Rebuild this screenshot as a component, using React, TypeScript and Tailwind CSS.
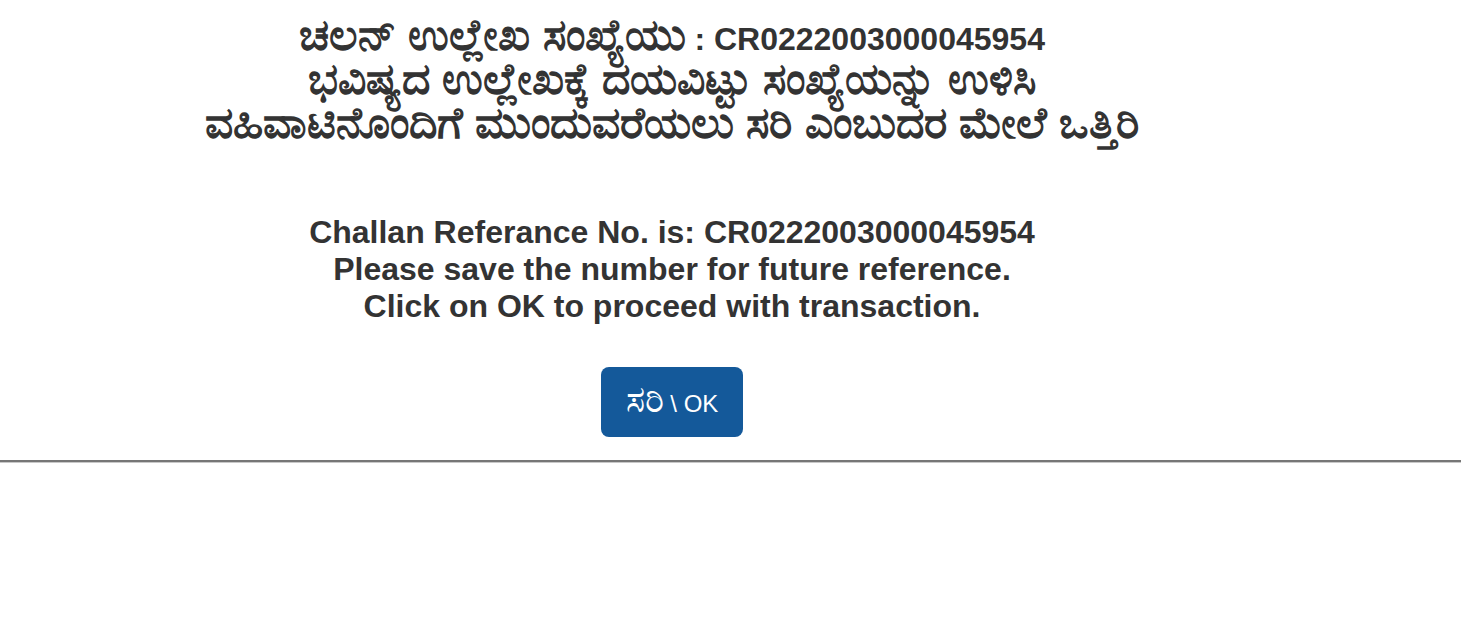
const kn = "inline-block text-[44px] leading-[44px]";

export default function App() {
  return (
    <main className="min-h-screen bg-white font-['Liberation_Sans',Arial,sans-serif] text-[#333333]">
      <div className="w-[1344px] pt-[13px] text-center font-bold">
        <div className="text-[32px] leading-[44px]">
          <p className="h-[44px]">
            <span className={kn}>ಚಲನ್ ಉಲ್ಲೇಖ ಸಂಖ್ಯೆಯು</span> : CR0222003000045954
          </p>
          <p className="h-[44px]">
            <span className={kn}>ಭವಿಷ್ಯದ ಉಲ್ಲೇಖಕ್ಕೆ ದಯವಿಟ್ಟು ಸಂಖ್ಯೆಯನ್ನು ಉಳಿಸಿ</span>
          </p>
          <p className="h-[44px]">
            <span className={kn}>ವಹಿವಾಟಿನೊಂದಿಗೆ ಮುಂದುವರೆಯಲು ಸರಿ ಎಂಬುದರ ಮೇಲೆ ಒತ್ತಿರಿ</span>
          </p>
        </div>
        <div className="mt-[69px] text-[32px] leading-[37px]">
          <p>Challan Referance No. is: CR0222003000045954</p>
          <p>Please save the number for future reference.</p>
          <p>Click on OK to proceed with transaction.</p>
        </div>
        <div className="mt-[42px] flex justify-center">
          <button
            type="button"
            className="h-[70px] w-[142px] rounded-lg bg-[#14599a] text-[24px] font-normal leading-none text-white"
          >
            <span className="inline-block text-[36px] leading-[24px]">ಸರಿ</span> \ OK
          </button>
        </div>
      </div>
      <hr className="mt-[23px] border-t-2 border-b border-t-[#767676] border-b-[#c8c8c8]" />
    </main>
  );
}
